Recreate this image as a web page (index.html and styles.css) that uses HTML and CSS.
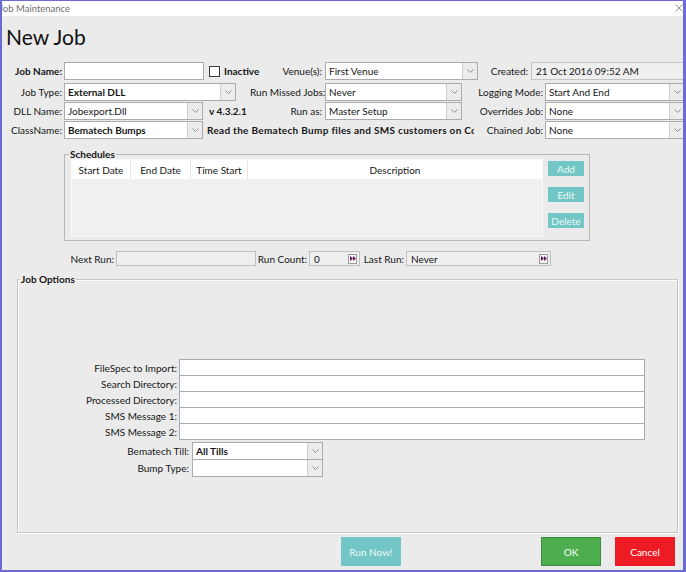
FILE: index.html
```html
<!DOCTYPE html>
<html>
<head>
<meta charset="utf-8">
<title>Job Maintenance</title>
<link rel="stylesheet" href="styles.css">
</head>
<body>
<div class="window">
  <div class="titlebar">
    <span class="title">Job Maintenance</span>
    <svg class="close" width="8" height="8" viewBox="0 0 8 8"><path d="M0.5 0.5L7.5 7.5M7.5 0.5L0.5 7.5" stroke="#9a9a9a" stroke-width="1"/></svg>
  </div>
  <div class="content">
    <h1 class="heading">New Job</h1>

    <div class="row row-1">
      <div class="blk blk-a">
        <span class="lbl lbl-a bold">Job Name:</span>
        <div class="input w-jobname"></div>
        <span class="check"></span>
        <span class="bold inactive">Inactive</span>
      </div>
      <div class="blk blk-b">
        <span class="lbl lbl-b">Venue(s):</span>
        <div class="select w-venue"><span class="val">First Venue</span><span class="dd"><svg width="7" height="4" viewBox="0 0 7 4"><path d="M0.5 0.5L3.5 3.5L6.5 0.5" fill="none" stroke="#8c8c8c"/></svg></span></div>
      </div>
      <div class="blk blk-c">
        <span class="lbl lbl-created">Created:</span>
        <div class="readonly w-created">21 Oct 2016 09:52 AM</div>
      </div>
    </div>

    <div class="row">
      <div class="blk blk-a">
        <span class="lbl lbl-a">Job Type:</span>
        <div class="select w-jobtype"><span class="val bold">External DLL</span><span class="dd"><svg width="7" height="4" viewBox="0 0 7 4"><path d="M0.5 0.5L3.5 3.5L6.5 0.5" fill="none" stroke="#8c8c8c"/></svg></span></div>
      </div>
      <div class="blk blk-b">
        <span class="lbl lbl-b">Run Missed Jobs:</span>
        <div class="select w-mid"><span class="val">Never</span><span class="dd"><svg width="7" height="4" viewBox="0 0 7 4"><path d="M0.5 0.5L3.5 3.5L6.5 0.5" fill="none" stroke="#8c8c8c"/></svg></span></div>
      </div>
      <div class="blk blk-c">
        <span class="lbl lbl-c">Logging Mode:</span>
        <div class="select w-right"><span class="val">Start And End</span><span class="dd"><svg width="7" height="4" viewBox="0 0 7 4"><path d="M0.5 0.5L3.5 3.5L6.5 0.5" fill="none" stroke="#8c8c8c"/></svg></span></div>
      </div>
    </div>

    <div class="row">
      <div class="blk blk-a">
        <span class="lbl lbl-a">DLL Name:</span>
        <div class="select w-dll"><span class="val">Jobexport.Dll</span><span class="dd"><svg width="7" height="4" viewBox="0 0 7 4"><path d="M0.5 0.5L3.5 3.5L6.5 0.5" fill="none" stroke="#8c8c8c"/></svg></span></div>
        <span class="bold version">v 4.3.2.1</span>
      </div>
      <div class="blk blk-b">
        <span class="lbl lbl-b">Run as:</span>
        <div class="select w-mid"><span class="val">Master Setup</span><span class="dd"><svg width="7" height="4" viewBox="0 0 7 4"><path d="M0.5 0.5L3.5 3.5L6.5 0.5" fill="none" stroke="#8c8c8c"/></svg></span></div>
      </div>
      <div class="blk blk-c">
        <span class="lbl lbl-c">Overrides Job:</span>
        <div class="select w-right"><span class="val">None</span><span class="dd"><svg width="7" height="4" viewBox="0 0 7 4"><path d="M0.5 0.5L3.5 3.5L6.5 0.5" fill="none" stroke="#8c8c8c"/></svg></span></div>
      </div>
    </div>

    <div class="row">
      <div class="blk blk-ab">
        <span class="lbl lbl-a">ClassName:</span>
        <div class="select w-dll"><span class="val bold">Bematech Bumps</span><span class="dd"><svg width="7" height="4" viewBox="0 0 7 4"><path d="M0.5 0.5L3.5 3.5L6.5 0.5" fill="none" stroke="#8c8c8c"/></svg></span></div>
        <span class="bold desc">Read the Bematech Bump files and SMS customers on Completion</span>
      </div>
      <div class="blk blk-c">
        <span class="lbl lbl-c">Chained Job:</span>
        <div class="select w-right"><span class="val">None</span><span class="dd"><svg width="7" height="4" viewBox="0 0 7 4"><path d="M0.5 0.5L3.5 3.5L6.5 0.5" fill="none" stroke="#8c8c8c"/></svg></span></div>
      </div>
    </div>

    <fieldset class="group schedules">
      <legend>Schedules</legend>
      <div class="sched-inner">
        <div class="list">
          <div class="list-head">
            <span class="col c-start">Start Date</span>
            <span class="col c-end">End Date</span>
            <span class="col c-time">Time Start</span>
            <span class="col c-desc">Description</span>
          </div>
        </div>
        <div class="side-btns">
          <span class="tbtn">Add</span>
          <span class="tbtn">Edit</span>
          <span class="tbtn">Delete</span>
        </div>
      </div>
    </fieldset>

    <div class="run-row">
      <span class="lbl nr-lbl">Next Run:</span>
      <div class="rfield w-next"></div>
      <span class="lbl rc-lbl">Run Count:</span>
      <div class="rfield w-count"><span>0</span><span class="ff"><svg width="6" height="5" viewBox="0 0 6 5"><path d="M0 0L3 2.5L0 5ZM3 0L6 2.5L3 5Z" fill="#6a1b5e"/></svg></span></div>
      <span class="lbl lr-lbl">Last Run:</span>
      <div class="rfield w-last"><span>Never</span><span class="ff"><svg width="6" height="5" viewBox="0 0 6 5"><path d="M0 0L3 2.5L0 5ZM3 0L6 2.5L3 5Z" fill="#6a1b5e"/></svg></span></div>
    </div>

    <fieldset class="group options">
      <legend>Job Options</legend>
      <div class="opts">
        <div class="opt-row"><span class="lbl opt-lbl">FileSpec to Import:</span><div class="input w-opt"></div></div>
        <div class="opt-row"><span class="lbl opt-lbl">Search Directory:</span><div class="input w-opt"></div></div>
        <div class="opt-row"><span class="lbl opt-lbl">Processed Directory:</span><div class="input w-opt"></div></div>
        <div class="opt-row"><span class="lbl opt-lbl">SMS Message 1:</span><div class="input w-opt"></div></div>
        <div class="opt-row"><span class="lbl opt-lbl">SMS Message 2:</span><div class="input w-opt"></div></div>
        <div class="combo-row first"><span class="lbl combo-lbl">Bematech Till:</span><div class="select w-till"><span class="val bold">All Tills</span><span class="dd"><svg width="7" height="4" viewBox="0 0 7 4"><path d="M0.5 0.5L3.5 3.5L6.5 0.5" fill="none" stroke="#8c8c8c"/></svg></span></div></div>
        <div class="combo-row"><span class="lbl combo-lbl">Bump Type:</span><div class="select w-till"><span class="val"></span><span class="dd"><svg width="7" height="4" viewBox="0 0 7 4"><path d="M0.5 0.5L3.5 3.5L6.5 0.5" fill="none" stroke="#8c8c8c"/></svg></span></div></div>
      </div>
    </fieldset>

    <div class="actions">
      <span class="abtn run-now">Run Now!</span>
      <span class="abtn ok">OK</span>
      <span class="abtn cancel">Cancel</span>
    </div>
  </div>
</div>
</body>
</html>
```

FILE: styles.css
```css
* { box-sizing: border-box; }
html, body { margin: 0; padding: 0; }
body {
  font-family: Lato, "Liberation Sans", sans-serif;
  font-size: 10px;
  line-height: 14px;
  color: #161616;
  background: #ffffff;
}
.bold { font-weight: 700; }

.window {
  width: 686px;
  height: 572px;
  border: 2px solid #6b6bd3;
  border-top-width: 1px;
  border-right-width: 3px;
  background: #ebebeb;
  overflow: hidden;
  display: flex;
  flex-direction: column;
}
.titlebar {
  height: 15px;
  flex: none;
  background: #ffffff;
  display: flex;
  align-items: center;
  justify-content: space-between;
}
.title { margin-left: -3px; color: #707070; font-size: 9.5px; }
.close { margin: -2px 0 0 0; }

.content { padding-left: 4px; }

.heading {
  margin: 9px 0 13px 0;
  font-size: 21px;
  line-height: 24px;
  font-weight: 400;
  color: #111111;
}

/* top form rows */
.row { display: flex; align-items: center; height: 18px; }
.row + .row { margin-top: 1px; }
.row-1 { margin-bottom: 3px; }
.blk { display: flex; align-items: center; height: 18px; flex: none; }
.blk-a { width: 244px; }
.blk-b { width: 228px; }
.blk-ab { width: 472px; overflow: hidden; }
.blk-c { width: 208px; }

.lbl { flex: none; text-align: right; white-space: nowrap; }
.lbl-a { width: 58px; padding-right: 2px; }
.lbl-b { width: 75px; padding-right: 3px; }
.lbl-c { width: 67px; padding-right: 2px; }
.lbl-created { width: 53px; padding-right: 3px; }

.input {
  height: 18px;
  background: #ffffff;
  border: 1px solid #a9abb0;
  flex: none;
}
.select {
  height: 18px;
  background: #ffffff;
  border: 1px solid #a9abb0;
  display: flex;
  align-items: stretch;
  flex: none;
}
.select .val { flex: 1; padding-left: 3px; display: flex; align-items: center; white-space: nowrap; overflow: hidden; }
.select .dd {
  width: 15px;
  flex: none;
  background: #ececec;
  border-left: 1px solid #cfcfcf;
  display: flex;
  align-items: center;
  justify-content: center;
}
.readonly {
  height: 18px;
  flex: none;
  background: #efefef;
  border: 1px solid #c4c4c4;
  padding-left: 4px;
  display: flex;
  align-items: center;
}

.w-jobname { width: 140px; }
.w-jobtype { width: 172px; }
.w-dll { width: 139px; }
.w-venue { width: 153px; }
.w-mid { width: 137px; }
.w-right { width: 140px; }
.w-created { width: 160px; }

.check {
  width: 11px;
  height: 11px;
  border: 1px solid #3a3a3a;
  background: #ffffff;
  margin-left: 5px;
  flex: none;
}
.inactive { margin-left: 4px; }
.version { margin-left: 6px; }
.desc {
  margin-left: 4px;
  width: 267px;
  overflow: hidden;
  white-space: nowrap;
  text-overflow: clip;
  letter-spacing: 0.3px;
  flex: none;
}

/* group boxes */
.group { margin: 0; min-width: 0; }
.group legend {
  font-weight: 700;
  line-height: 10px;
  padding: 0 1px;
  margin-left: -2px;
}
.schedules {
  margin: 10px 0 0 58px;
  width: 526px;
  border: 1px solid #b7b7b7;
  padding: 0 5px 3px 6px;
}
.sched-inner { display: flex; gap: 5px; }
.list {
  width: 472px;
  height: 78px;
  background: #f0f0f0;
  border: 1px solid #fafafa;
}
.list-head {
  display: flex;
  height: 19px;
  background: #ffffff;
}
.col {
  display: flex;
  align-items: center;
  justify-content: center;
  border-right: 1px solid #e6e6e6;
  flex: none;
}
.c-start { width: 59px; }
.c-end { width: 60px; }
.c-time { width: 57px; }
.c-desc { flex: 1; border-right: none; }

.side-btns {
  width: 36px;
  display: flex;
  flex-direction: column;
  gap: 11px;
  padding-top: 2px;
}
.tbtn {
  height: 15px;
  background: #72c7c6;
  color: #eef8f8;
  display: flex;
  align-items: center;
  justify-content: center;
}

/* next run row */
.run-row {
  display: flex;
  align-items: center;
  height: 15px;
  margin: 10px 0 0 60px;
}
.nr-lbl { width: 50px; padding-right: 2px; }
.rc-lbl { width: 53px; padding-right: 2px; }
.lr-lbl { width: 46px; padding-right: 2px; }
.rfield {
  height: 15px;
  flex: none;
  background: #efefef;
  border: 1px solid #c0c0c0;
  display: flex;
  align-items: center;
  justify-content: space-between;
  padding: 0 2px 0 4px;
}
.w-next { width: 140px; }
.w-count { width: 51px; }
.w-last { width: 145px; }
.ff {
  width: 9px;
  height: 10px;
  border: 1px solid #9c9c9c;
  background: #f7f7f7;
  display: flex;
  align-items: center;
  justify-content: center;
}

/* job options */
.options {
  margin: 8px 0 0 11px;
  width: 661px;
  height: 259px;
  border: 1px solid #c6c6c6;
  box-shadow: 1px 1px 0 #ffffff, inset 1px 1px 0 #ffffff;
  padding: 0 4px 0 4px;
}
.opts { padding-top: 75px; }
.opt-row { display: flex; align-items: center; height: 17px; }
.opt-row + .opt-row { margin-top: -1px; }
.opt-lbl { width: 157px; padding-right: 2px; }
.w-opt { width: 466px; height: 17px; }
.combo-row { display: flex; align-items: center; height: 18px; margin-top: -1px; }
.combo-row.first { margin-top: 2px; }
.combo-lbl { width: 170px; padding-right: 3px; }
.w-till { width: 131px; }

/* bottom actions */
.actions {
  display: flex;
  margin-top: 4px;
  height: 29px;
}
.abtn {
  width: 60px;
  height: 29px;
  display: flex;
  align-items: center;
  justify-content: center;
  color: #ffffff;
  flex: none;
}
.run-now { margin-left: 335px; background: #72c7c6; color: #eef8f8; }
.ok { margin-left: 140px; background: #4cae4f; border: 1px solid #3d8b40; }
.cancel { margin-left: 14px; background: #ed1c24; }
```
